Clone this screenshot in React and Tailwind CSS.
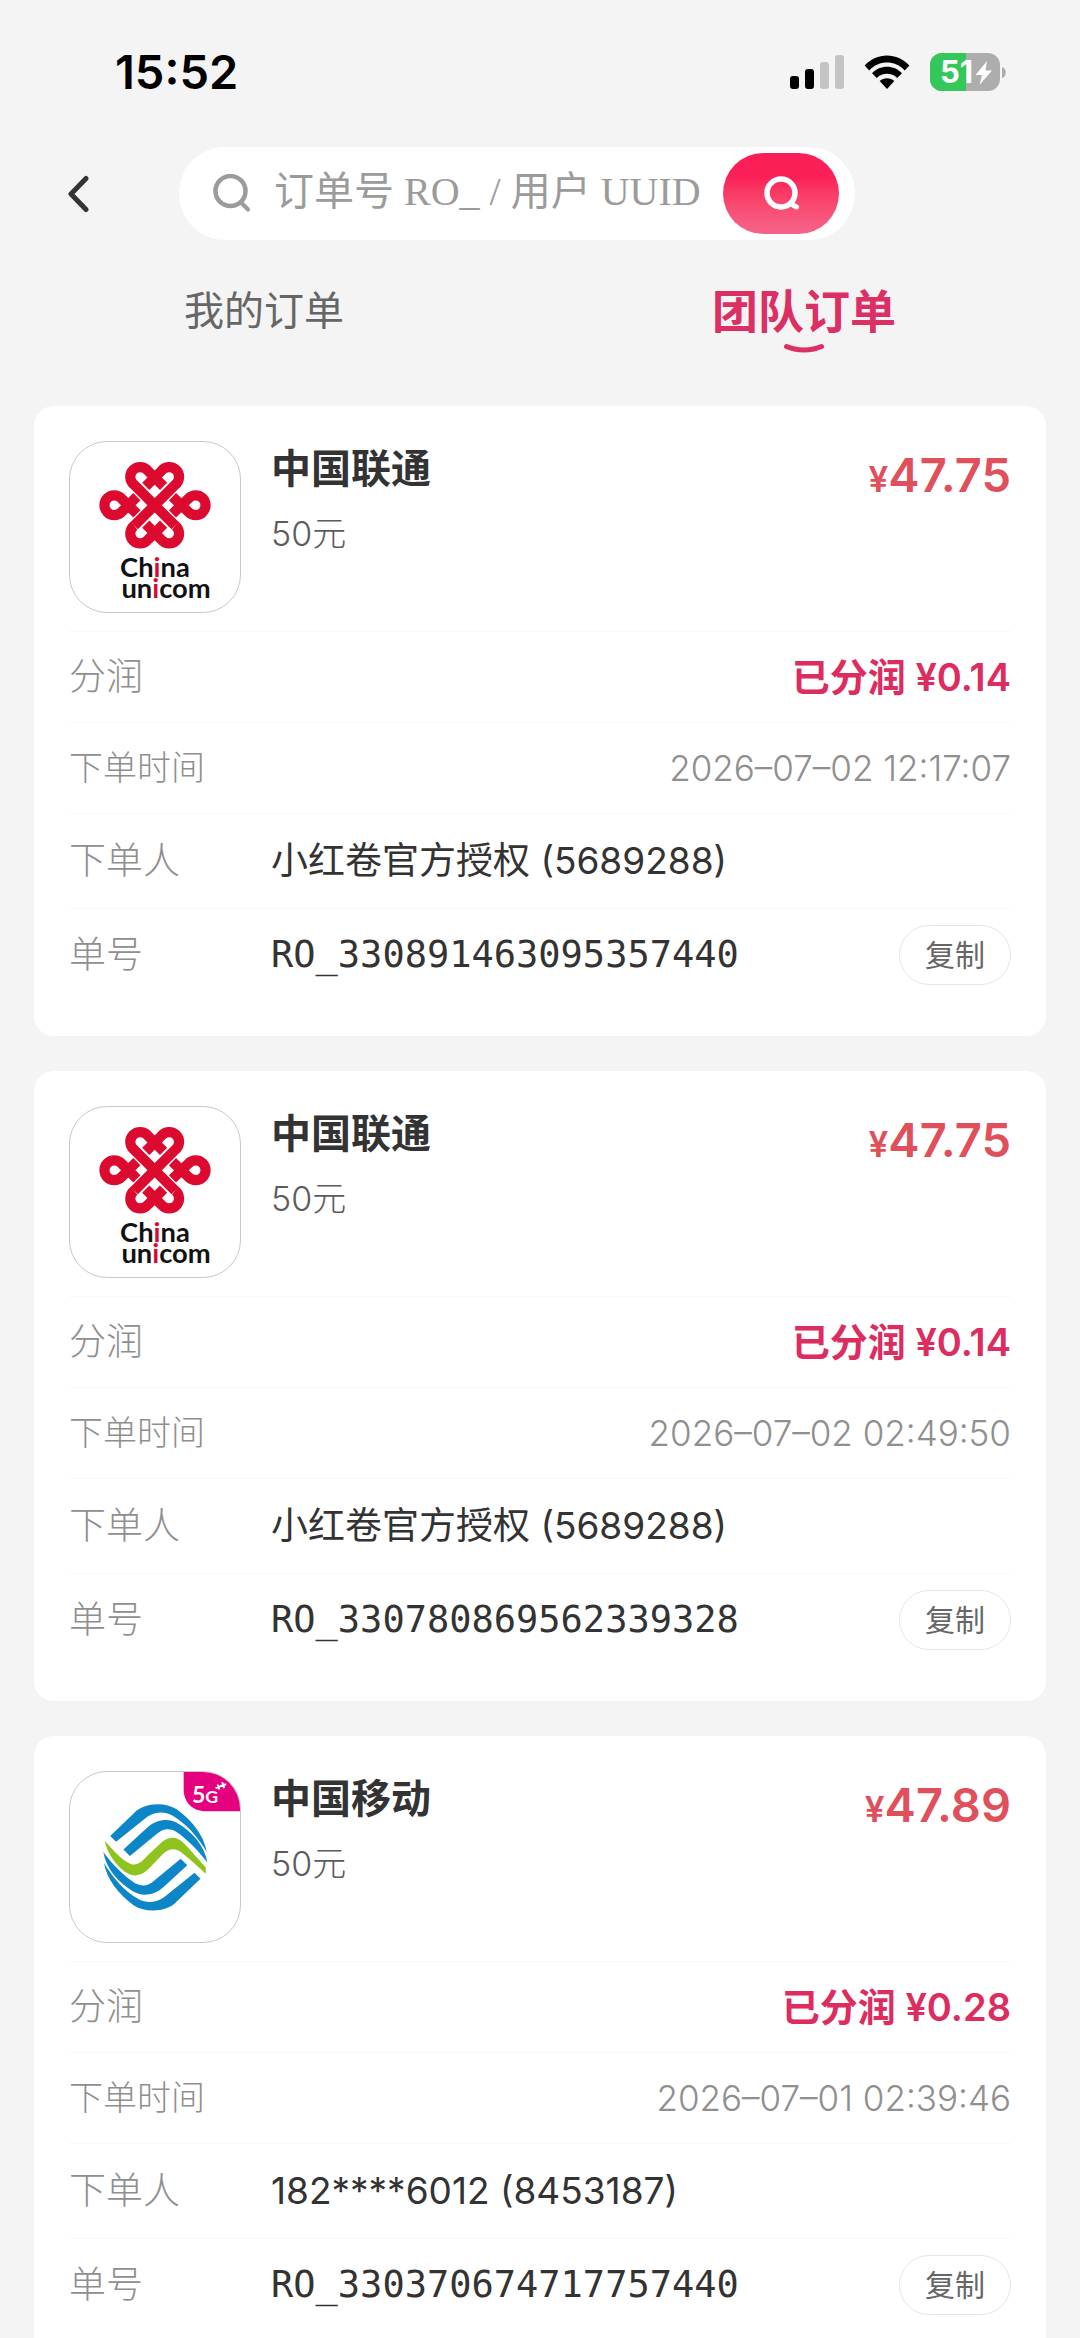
import React, { useState } from "react";

const ORDERS = [
  {
    carrier: "unicom",
    name: "中国联通",
    spec: "50元",
    price: "47.75",
    profit: "0.14",
    createdAt: "2026–07–02 12:17:07",
    buyer: "小红卷官方授权 (5689288)",
    orderNo: "RO_330891463095357440",
  },
  {
    carrier: "unicom",
    name: "中国联通",
    spec: "50元",
    price: "47.75",
    profit: "0.14",
    createdAt: "2026–07–02 02:49:50",
    buyer: "小红卷官方授权 (5689288)",
    orderNo: "RO_330780869562339328",
  },
  {
    carrier: "mobile",
    name: "中国移动",
    spec: "50元",
    price: "47.89",
    profit: "0.28",
    createdAt: "2026–07–01 02:39:46",
    buyer: "182****6012 (8453187)",
    orderNo: "RO_330370674717757440",
  },
];

const TABS = [
  { key: "mine", label: "我的订单" },
  { key: "team", label: "团队订单" },
];

function StatusBar() {
  return (
    <div className="flex items-center justify-between pt-11 pl-[115px] pr-[73px]">
      <span className="text-[47px] leading-[56px] font-semibold text-black">15:52</span>
      <div className="flex items-center">
        <svg width="54" height="34" viewBox="0 0 54 34" aria-hidden="true">
          <rect x="0" y="21" width="9" height="13" rx="3" fill="#000" />
          <rect x="15" y="14" width="9" height="20" rx="3" fill="#000" />
          <rect x="30" y="7" width="9" height="27" rx="3" fill="#c4c4c4" />
          <rect x="45" y="0" width="9" height="34" rx="3" fill="#c4c4c4" />
        </svg>
        <svg className="ml-5" width="46" height="34" viewBox="0 0 46 34" aria-hidden="true">
          <path d="M0.6 10.6C12.6-2.9 33.4-2.9 45.4 10.6L40.7 15.4C31.2 5 14.8 5 5.3 15.4Z" fill="#000" />
          <path d="M8 18.2C16 9.6 30 9.6 38 18.2L33.2 23C27.6 17.4 18.4 17.4 12.8 23Z" fill="#000" />
          <path d="M15.7 26C19.8 22.2 26.2 22.2 30.3 26L23 34Z" fill="#000" />
        </svg>
        <svg className="ml-5" width="77" height="38" viewBox="0 0 77 38" aria-hidden="true">
          <defs>
            <clipPath id="battery">
              <rect width="70" height="38" rx="12" />
            </clipPath>
          </defs>
          <g clipPath="url(#battery)">
            <rect width="70" height="38" fill="#adadad" />
            <rect width="36" height="38" fill="#34c759" />
          </g>
          <path d="M72 14C77 15 77 24 72 25Z" fill="#adadad" />
          <text x="10" y="30" fontSize="31" fontWeight="700" fill="#fff">
            51
          </text>
          <path d="M57 8L45.500 22H52L49.500 32L62 17.500H55.500Z" fill="#fff" />
        </svg>
      </div>
    </div>
  );
}

function SearchGlyph({ className }) {
  return (
    <svg className={className} width="40" height="40" viewBox="0 0 40 40" fill="none" stroke="currentColor" aria-hidden="true">
      <circle cx="18.500" cy="17" r="15" strokeWidth="4.500" />
      <path d="M30 29.500L36 35.500" strokeWidth="4" strokeLinecap="round" />
    </svg>
  );
}

function SearchHeader() {
  const [keyword, setKeyword] = useState("");

  return (
    <div className="flex items-center pt-[47px] pl-[67px] pr-[225px]">
      <button type="button" aria-label="返回" className="shrink-0 text-[#333]">
        <svg width="22" height="38" viewBox="0 0 22 38" fill="none" stroke="currentColor" strokeWidth="5" strokeLinecap="round" strokeLinejoin="round">
          <path d="M19 3.500L4 19L19 34.500" />
        </svg>
      </button>

      <form
        className="ml-[90px] flex min-w-0 flex-1 items-center rounded-full bg-white py-1.5 pl-[33px] pr-4"
        onSubmit={(e) => e.preventDefault()}
      >
        <SearchGlyph className="shrink-0 text-[#9b9b9b]" />
        <input
          type="text"
          aria-label="订单号 / 用户"
          placeholder="订单号 RO_ / 用户 UUID"
          value={keyword}
          onChange={(e) => setKeyword(e.target.value)}
          className="ml-[22px] min-w-0 flex-1 bg-transparent pb-1 font-['Liberation_Serif','Noto_Sans_CJK_SC',serif] text-[40px] leading-[60px] text-[#333] outline-none placeholder:text-[#9b9b9b]"
        />
        <button
          type="submit"
          aria-label="搜索"
          className="flex h-[81px] w-[116px] shrink-0 items-center justify-center rounded-full bg-linear-to-b from-[#fa1f57] from-30% to-[#f5648a] text-white"
        >
          <svg width="40" height="40" viewBox="0 0 40 40" fill="none" stroke="currentColor" aria-hidden="true">
            <circle cx="20" cy="19" r="14" strokeWidth="5.500" />
            <path d="M30 30L35.500 33" strokeWidth="5" strokeLinecap="round" />
          </svg>
        </button>
      </form>
    </div>
  );
}

function Tabs({ active, onChange }) {
  return (
    <div role="tablist" className="flex items-start justify-around pt-11">
      {TABS.map((tab) => {
        const selected = tab.key === active;
        return (
          <button
            key={tab.key}
            type="button"
            role="tab"
            aria-selected={selected}
            onClick={() => onChange(tab.key)}
            className={
              selected
                ? "flex flex-col items-center text-[46px] leading-[54px] font-semibold text-[#dc2f64]"
                : "text-[40px] leading-[54px] text-[#666]"
            }
          >
            {tab.label}
            {selected && (
              <svg className="mt-1" width="42" height="12" viewBox="0 0 42 12" fill="none" aria-hidden="true">
                <path d="M3.500 4.500C13 9 29 9 38.500 4.500" stroke="#dc2f64" strokeWidth="5" strokeLinecap="round" />
              </svg>
            )}
          </button>
        );
      })}
    </div>
  );
}

function UnicomLogo() {
  return (
    <svg className="size-full" viewBox="148 153 516 516" role="img" aria-label="China unicom">
      <g fill="none" stroke="#dd0a30" strokeWidth="31">
        <path d="M467 407L343 283A30 30 0 1 1 385 241L432 288" />
        <path d="M343 407L467 283A30 30 0 1 0 425 241L378 288" />
        <path d="M343 407A30 30 0 1 0 385 449L432 402" />
        <path d="M467 407A30 30 0 1 1 425 449L378 402" />
        <path d="M351 371L304 324A30 30 0 1 0 304 366L351 319" />
        <path d="M459 371L508 324A30 30 0 1 1 508 366L459 319" />
      </g>
      <g fontFamily="Lato, sans-serif" fontSize="83" fontWeight="700" fill="#111">
        <text x="300" y="563">
          Ch<tspan fill="#dd0a30">i</tspan>na
        </text>
        <text x="304" y="627">
          un<tspan fill="#dd0a30">i</tspan>com
        </text>
      </g>
    </svg>
  );
}

function MobileBands() {
  return (
    <>
      <path d="M150 227L222 158C252 124 318 124 352 146C400 182 434 225 443 275C412 225 380 190 340 166C310 150 278 154 254 176L168 245Z" />
      <path d="M190 268L262 202C290 176 328 172 354 188C398 215 436 255 445 308C418 272 386 238 350 214C326 201 308 206 290 222L210 288Z" />
    </>
  );
}

function MobileLogo() {
  return (
    <svg className="size-full" viewBox="28 33 516 516" role="img" aria-label="China Mobile 5G">
      <g fill="#0d86c8">
        <MobileBands />
        <g transform="rotate(180 287 292)">
          <MobileBands />
        </g>
      </g>
      <path
        fill="#8fc31f"
        d="M133 242C158 268 182 300 212 312C236 320 252 298 268 282L300 252C326 226 352 228 372 248C398 274 422 304 440 322V342C416 320 396 300 370 280C346 260 328 266 310 282L270 324C246 350 220 354 194 336C166 314 142 282 133 242Z"
      />
      <path fill="#e5007f" d="M373 33H544V152H440C400 152 373 125 373 86Z" />
      <text x="398" y="127" fontFamily="Lato, sans-serif" fontSize="70" fontWeight="700" fill="#fff">
        5<tspan fontSize="54">G</tspan>
      </text>
      <path d="M470 82L486 76M476 71L481 86M484 76L502 70M490 64L496 82" stroke="#fff" strokeWidth="6" />
    </svg>
  );
}

function OrderCard({ order }) {
  const copyOrderNo = () => navigator.clipboard?.writeText(order.orderNo);

  return (
    <article className="rounded-[20px] bg-white p-[35px]">
      <div className="flex items-start">
        <div className="size-[172px] shrink-0 overflow-hidden rounded-[38px] border border-[#c8c8c8]">
          {order.carrier === "unicom" ? <UnicomLogo /> : <MobileLogo />}
        </div>
        <div className="ml-[30px] min-w-0 flex-1">
          <h2 className="text-[40px] leading-[56px] font-bold text-[#333]">{order.name}</h2>
          <p className="mt-3 text-[34px] leading-[50px] font-light text-[#5c5c5c]">{order.spec}</p>
        </div>
        <p className="pt-2 text-[47px] leading-[52px] font-semibold text-[#e0505c]">
          <span className="text-[35px]">¥</span>
          {order.price}
        </p>
      </div>

      <dl className="mt-[18px] text-[#8f8f8f]">
        <div className="flex justify-between border-t border-[#f9f9f9] py-5 text-[38px] leading-[50px]">
          <dt className="text-[37px] font-light">分润</dt>
          <dd className="font-semibold text-[#dc2c60]">已分润 ¥{order.profit}</dd>
        </div>
        <div className="flex justify-between border-t border-[#f9f9f9] py-5 text-[35px] leading-[50px] font-light">
          <dt className="text-[34px]">下单时间</dt>
          <dd>{order.createdAt}</dd>
        </div>
        <div className="flex border-t border-[#f9f9f9] py-5 text-[37px] leading-[54px]">
          <dt className="w-[202px] shrink-0 font-light">下单人</dt>
          <dd className="text-[#333]">{order.buyer}</dd>
        </div>
        <div className="flex items-center border-t border-[#f9f9f9] py-4 text-[37px] leading-[54px]">
          <dt className="w-[202px] shrink-0 font-light">单号</dt>
          <dd className="flex flex-1 items-center justify-between">
            <span className="font-['DejaVu_Sans_Mono',monospace] text-[#333]">{order.orderNo}</span>
            <button
              type="button"
              onClick={copyOrderNo}
              className="rounded-full border border-[#e6e6e6] px-[25px] py-2 text-[30px] leading-[42px] text-[#666]"
            >
              复制
            </button>
          </dd>
        </div>
      </dl>
    </article>
  );
}

function App() {
  const [activeTab, setActiveTab] = useState("team");

  return (
    <div className="h-screen overflow-hidden bg-[#f4f4f4] font-[Inter,'Noto_Sans_CJK_SC',sans-serif]">
      <StatusBar />
      <SearchHeader />
      <Tabs active={activeTab} onChange={setActiveTab} />

      <main className="mt-[52px] flex flex-col gap-[35px] px-[34px]">
        {ORDERS.map((order) => (
          <OrderCard key={order.orderNo} order={order} />
        ))}
      </main>
    </div>
  );
}

export default App;
